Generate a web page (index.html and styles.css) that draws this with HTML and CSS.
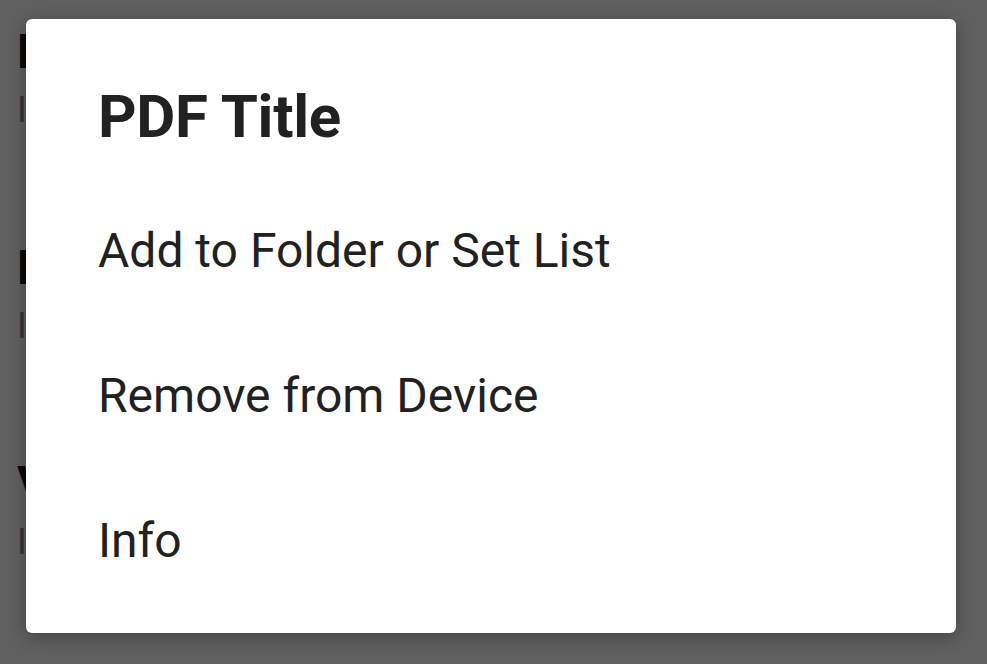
FILE: index.html
```html
<!DOCTYPE html>
<html lang="en">
<head>
    <meta charset="UTF-8">
    <meta name="viewport" content="width=device-width, initial-scale=1.0">
    <title>PDF Options</title>
    <link rel="stylesheet" href="styles.css">
</head>
<body>

    <div class="song-list">
        <div class="song">
            <div class="song-title">Bach</div>
            <div class="song-info">Imported</div>
        </div>
        <div class="song">
            <div class="song-title">Blues</div>
            <div class="song-info">Imported</div>
        </div>
        <div class="song">
            <div class="song-title">Vivaldi</div>
            <div class="song-info">Imported</div>
        </div>
    </div>

    <div class="dialog">
        <div class="dialog-title">PDF Title</div>
        <div class="dialog-item">Add to Folder or Set List</div>
        <div class="dialog-item">Remove from Device</div>
        <div class="dialog-item">Info</div>
    </div>

</body>
</html>
```

FILE: styles.css
```css
body {
    margin: 0;
    height: 100vh;
    overflow: hidden;
    background-color: #606060;
    font-family: Roboto, "Noto Sans", sans-serif;
    position: relative;
}

.song-list {
    padding: 24px 0 0 17px;
}

.song {
    margin-bottom: 108px;
}

.song-title {
    font-size: 48px;
    line-height: 56px;
    font-weight: 700;
    color: #0a0a0a;
    margin-bottom: 8px;
    white-space: nowrap;
}

.song-info {
    font-size: 36px;
    line-height: 44px;
    color: #333;
    white-space: nowrap;
}

.dialog {
    position: absolute;
    top: 19px;
    left: 26px;
    width: 930px;
    height: 614px;
    box-sizing: border-box;
    padding: 62px 0 20px 72px;
    background-color: #fff;
    border-radius: 6px;
    box-shadow: 0 4px 18px rgba(0, 0, 0, 0.3);
    color: #212121;
}

.dialog-title {
    font-size: 60px;
    line-height: 72px;
    font-weight: 700;
    letter-spacing: -0.3px;
    margin-bottom: 25px;
}

.dialog-item {
    font-size: 48px;
    line-height: 145px;
}
```
